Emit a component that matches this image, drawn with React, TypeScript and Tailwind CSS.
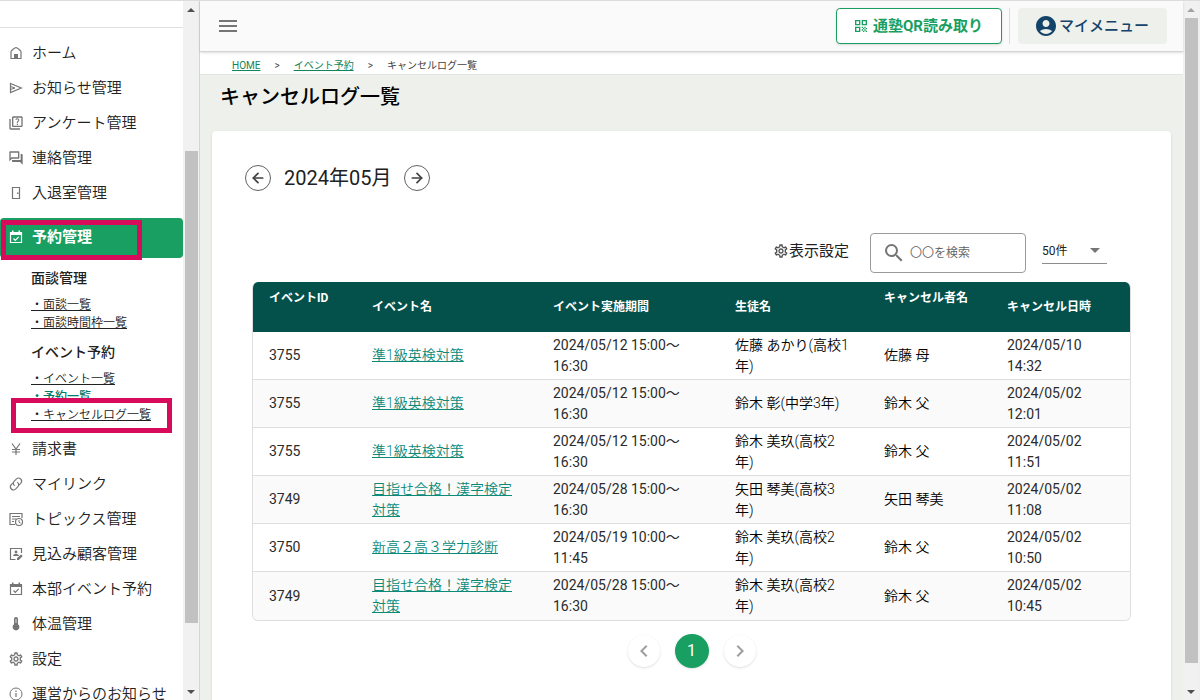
import type { ReactNode } from "react";
import { ArrowLeft, ArrowRight } from "lucide-react";
import {
  MdAccountCircle,
  MdArrowDropDown,
  MdChevronLeft,
  MdChevronRight,
  MdMenu,
  MdOutlineForum,
  MdOutlineQuiz,
  MdOutlineSettings,
  MdQrCode,
  MdSearch,
} from "react-icons/md";

type NavItem = { label: string; icon: ReactNode };

const iconClass = "mb-0.5 h-4 w-4 shrink-0 text-[#757575]";

function HomeIcon() {
  return (
    <svg viewBox="0 0 16 16" className={iconClass} fill="none">
      <path
        d="M3 13.500V6.500C3.200 5.300 6.800 2.700 8 2.700s4.800 2.600 5 3.800v7Z"
        stroke="currentColor"
        strokeWidth="1.2"
      />
      <path d="M6 14V9h4v5Z" fill="currentColor" />
    </svg>
  );
}

function SendIcon() {
  return (
    <svg viewBox="0 0 16 16" className={iconClass} fill="none">
      <path
        d="M2.500 3.500 13.300 8 2.500 12.500Z"
        stroke="currentColor"
        strokeWidth="1.2"
      />
      <path d="M2.500 6.500 7 8 2.500 9.500" stroke="currentColor" />
    </svg>
  );
}

function DoorIcon() {
  return (
    <svg viewBox="0 0 16 16" className={iconClass} fill="none">
      <path
        d="M4.500 2.500h7v11h-7Z"
        stroke="currentColor"
        strokeWidth="1.2"
      />
      <path d="M9 7.500h1.500v1.500H9Z" fill="currentColor" />
    </svg>
  );
}

function CalendarIcon({ className }: { className: string }) {
  return (
    <svg viewBox="0 0 16 16" className={className} fill="none">
      <path
        d="M2.500 3.500h11v10h-11Z"
        stroke="currentColor"
        strokeWidth="1.2"
      />
      <path
        d="M2 3h12v3H2ZM4 1.500h1.500V4H4ZM10.500 1.500H12V4h-1.500Z"
        fill="currentColor"
      />
      <path
        d="m5.500 9.500 1.800 1.800 3.400-3.500"
        stroke="currentColor"
        strokeWidth="1.2"
      />
    </svg>
  );
}

function YenIcon() {
  return (
    <svg viewBox="0 0 16 16" className={iconClass} fill="none">
      <path
        d="m4 2.500 4 5.500 4-5.500M8 8v6M4 8.500h8M4 11h8"
        stroke="currentColor"
        strokeWidth="1.2"
      />
    </svg>
  );
}

function LinkIcon() {
  return (
    <svg viewBox="0 0 24 24" className={iconClass} fill="none">
      <path
        d="M10 14.500c-2.500-1.800-2.600-4.800-.6-6.900l3-3c4.500-4.200 10.800 1.700 6.700 6.400l-2.600 2.700M14 9.500c2.500 1.800 2.600 4.800.6 6.900l-3 3c-4.500 4.200-10.800-1.700-6.700-6.400l2.600-2.700"
        stroke="currentColor"
        strokeWidth="1.7"
      />
    </svg>
  );
}

function TopicsIcon() {
  return (
    <svg viewBox="0 0 16 16" className={iconClass} fill="none">
      <path
        d="M14 7V2.500H2v11h5M4 5.500h8M4 8h4M4 10.500h2"
        stroke="currentColor"
        strokeWidth="1.2"
      />
      <circle
        cx="11"
        cy="11"
        r="3.500"
        stroke="currentColor"
        strokeWidth="1.2"
      />
      <path d="M11 9v2.200l1.600.9" stroke="currentColor" />
    </svg>
  );
}

function ProspectIcon() {
  return (
    <svg viewBox="0 0 16 16" className={iconClass} fill="none">
      <path
        d="M7.500 13.500h-5v-11h11V7"
        stroke="currentColor"
        strokeWidth="1.2"
      />
      <circle cx="8" cy="6" r="1.400" fill="currentColor" />
      <path d="M5 10c.4-2.600 5.600-2.600 6 0Z" fill="currentColor" />
      <path d="M9 14v-1.700L13 8.400l1.700 1.700-3.900 3.900Z" fill="currentColor" />
    </svg>
  );
}

function ThermometerIcon() {
  return (
    <svg viewBox="0 0 16 16" className={iconClass} fill="currentColor">
      <path d="M6 3a2 2 0 0 1 4 0v5.300a3.400 3.400 0 1 1-4 0Z" />
      <path d="M8 3v4" stroke="white" strokeWidth="0.8" />
    </svg>
  );
}

function InfoIcon() {
  return (
    <svg viewBox="0 0 16 16" className={iconClass} fill="none">
      <circle cx="8" cy="8" r="6" stroke="currentColor" />
      <path
        d="M8 7v4M8 4.500V6"
        stroke="currentColor"
        strokeWidth="1.2"
      />
    </svg>
  );
}

const topItems: NavItem[] = [
  { label: "ホーム", icon: <HomeIcon /> },
  { label: "お知らせ管理", icon: <SendIcon /> },
  { label: "アンケート管理", icon: <MdOutlineQuiz className={iconClass} /> },
  { label: "連絡管理", icon: <MdOutlineForum className={iconClass} /> },
  { label: "入退室管理", icon: <DoorIcon /> },
];

const bottomItems: NavItem[] = [
  { label: "請求書", icon: <YenIcon /> },
  { label: "マイリンク", icon: <LinkIcon /> },
  { label: "トピックス管理", icon: <TopicsIcon /> },
  { label: "見込み顧客管理", icon: <ProspectIcon /> },
  {
    label: "本部イベント予約",
    icon: <CalendarIcon className={iconClass} />,
  },
  { label: "体温管理", icon: <ThermometerIcon /> },
  { label: "設定", icon: <MdOutlineSettings className={iconClass} /> },
  { label: "運営からのお知らせ", icon: <InfoIcon /> },
];

const columns = [
  { label: "イベントID", className: "w-[103px] align-top pt-2" },
  { label: "イベント名", className: "w-[181px] align-middle" },
  { label: "イベント実施期間", className: "w-[182px] align-middle" },
  { label: "生徒名", className: "w-[149px] align-middle" },
  { label: "キャンセル者名", className: "w-[123px] align-top pt-2" },
  { label: "キャンセル日時", className: "w-[139px] align-middle" },
];

const logs = [
  {
    id: 3755,
    event: "準1級英検対策",
    period: "2024/05/12 15:00～16:30",
    student: "佐藤 あかり(高校1年)",
    canceledBy: "佐藤 母",
    canceledAt: "2024/05/10 14:32",
  },
  {
    id: 3755,
    event: "準1級英検対策",
    period: "2024/05/12 15:00～16:30",
    student: "鈴木 彰(中学3年)",
    canceledBy: "鈴木 父",
    canceledAt: "2024/05/02 12:01",
  },
  {
    id: 3755,
    event: "準1級英検対策",
    period: "2024/05/12 15:00～16:30",
    student: "鈴木 美玖(高校2年)",
    canceledBy: "鈴木 父",
    canceledAt: "2024/05/02 11:51",
  },
  {
    id: 3749,
    event: "目指せ合格！漢字検定対策",
    period: "2024/05/28 15:00～16:30",
    student: "矢田 琴美(高校3年)",
    canceledBy: "矢田 琴美",
    canceledAt: "2024/05/02 11:08",
  },
  {
    id: 3750,
    event: "新高２高３学力診断",
    period: "2024/05/19 10:00～11:45",
    student: "鈴木 美玖(高校2年)",
    canceledBy: "鈴木 父",
    canceledAt: "2024/05/02 10:50",
  },
  {
    id: 3749,
    event: "目指せ合格！漢字検定対策",
    period: "2024/05/28 15:00～16:30",
    student: "鈴木 美玖(高校2年)",
    canceledBy: "鈴木 父",
    canceledAt: "2024/05/02 10:45",
  },
];

function NavList({ items }: { items: NavItem[] }) {
  return (
    <ul>
      {items.map((item) => (
        <li key={item.label}>
          <a href="#" className="flex h-[35px] items-center gap-2 pl-2">
            {item.icon}
            <span className="whitespace-nowrap text-[15px] font-[350]">
              {item.label}
            </span>
          </a>
        </li>
      ))}
    </ul>
  );
}

function SubLink({ label }: { label: string }) {
  return (
    <a href="#" className="relative block text-xs/[18px] font-[350] underline">
      {label}
    </a>
  );
}

function Scrollbar({
  offset,
  size,
  upColor,
}: {
  offset: string;
  size: string;
  upColor: string;
}) {
  return (
    <div
      aria-hidden="true"
      className="flex w-4 shrink-0 flex-col items-center bg-[#f1f1f1]"
    >
      <svg viewBox="0 0 16 17" className="h-[17px] w-4" fill={upColor}>
        <path d="M4 11h8L8 7Z" />
      </svg>
      <div className="w-full flex-1 pl-0.5 pr-px">
        <div style={{ height: offset }} />
        <div className="bg-[#c1c1c1]" style={{ height: size }} />
      </div>
      <svg viewBox="0 0 16 17" className="h-[17px] w-4" fill="#505050">
        <path d="M4 7h8l-4 4Z" />
      </svg>
    </div>
  );
}

function Sidebar() {
  return (
    <aside className="flex w-[200px] shrink-0 border-r border-[#d5d5d5] bg-white">
      <nav className="min-w-0 flex-1 overflow-hidden">
        <div className="mb-2 h-[27px] border-b border-[#e0e0e0]" />
        <NavList items={topItems} />
        <div className="relative mt-[7px] h-10 rounded bg-[#189f61]">
          <a
            href="#"
            className="flex h-[38px] items-center gap-2 pl-2 text-[15px] font-bold text-white"
          >
            <CalendarIcon className="h-4 w-4 shrink-0" />
            予約管理
          </a>
          <div className="pointer-events-none absolute left-px top-0.5 h-10 w-[141px] border-[5px] border-[#d80a5c]" />
        </div>
        <div className="pb-2 pl-[31px] pt-2.5">
          <h2 className="mb-[7px] text-sm/[21px] font-medium">面談管理</h2>
          <SubLink label="・面談一覧" />
          <SubLink label="・面談時間枠一覧" />
          <h2 className="mb-[7px] mt-2.5 text-sm/[21px] font-medium">
            イベント予約
          </h2>
          <SubLink label="・イベント一覧" />
          <a
            href="#"
            className="block text-xs/[18px] font-medium text-[#00796b] underline"
          >
            ・予約一覧
          </a>
          <div className="relative">
            <div className="absolute -left-5 -top-2 h-[35px] w-[161px] border-[5px] border-[#d80a5c] bg-white" />
            <SubLink label="・キャンセルログ一覧" />
          </div>
        </div>
        <NavList items={bottomItems} />
      </nav>
      <Scrollbar offset="20%" size="71%" upColor="#505050" />
    </aside>
  );
}

function Header() {
  return (
    <header className="relative flex h-[51px] shrink-0 items-center border-b border-[#d4d6d4] bg-[#fafafa] px-4 shadow-sm">
      <button aria-label="メニュー" className="text-[#757575]">
        <MdMenu className="h-6 w-6" />
      </button>
      <button className="ml-auto flex h-9 items-center gap-1 rounded border border-[#189f61] bg-white pl-4 pr-[18px] text-[15px] font-bold text-[#189f61] shadow">
        <MdQrCode className="h-4 w-4" />
        通塾QR読み取り
      </button>
      <div className="ml-[7px] mr-2 h-9 w-px bg-[#dcdcdc]" />
      <button className="flex h-9 items-center gap-px rounded bg-[#eef0ec] pl-4 pr-[18px] text-[15px] font-medium text-[#14436a]">
        <MdAccountCircle className="h-6 w-6" />
        マイメニュー
      </button>
    </header>
  );
}

function Breadcrumb() {
  return (
    <nav className="flex h-[23px] shrink-0 items-center gap-3.5 border-b border-[#e3e5e1] bg-white pl-8 pt-1 text-[10px] text-[#424242]">
      <a href="#" className="text-[#11845a] underline">
        HOME
      </a>
      <span>&gt;</span>
      <a href="#" className="text-[#11845a] underline">
        イベント予約
      </a>
      <span>&gt;</span>
      <span>キャンセルログ一覧</span>
    </nav>
  );
}

function MonthPicker() {
  const arrowClass =
    "flex h-[26px] w-[26px] items-center justify-center rounded-full border border-[#616161] text-[#424242]";

  return (
    <div className="flex items-center gap-[13px]">
      <button aria-label="前の月" className={arrowClass}>
        <ArrowLeft className="h-4 w-4" strokeWidth={2.6} />
      </button>
      <span className="text-xl/[26px]">2024年05月</span>
      <button aria-label="次の月" className={arrowClass}>
        <ArrowRight className="h-4 w-4" strokeWidth={2.6} />
      </button>
    </div>
  );
}

function Toolbar() {
  return (
    <div className="flex items-center justify-end gap-4 pr-6">
      <button className="mb-1 mr-[5px] flex items-center text-[15px]">
        <MdOutlineSettings className="h-4 w-4 text-[#505050]" />
        表示設定
      </button>
      <label className="flex h-10 w-[156px] items-center gap-1 rounded border border-[#9b9b9b] px-[11px]">
        <MdSearch className="h-6 w-6 shrink-0 text-[#757575]" />
        <input
          type="text"
          aria-label="検索"
          placeholder="〇〇を検索"
          className="w-full min-w-0 text-xs font-[350] outline-none placeholder:text-[#616161]"
        />
      </label>
      <label className="relative mb-[3px] flex w-[65px] items-center border-b border-[#8c8c8c]">
        <select
          aria-label="表示件数"
          className="h-6 w-full appearance-none text-xs outline-none"
        >
          <option>50件</option>
        </select>
        <MdArrowDropDown className="pointer-events-none absolute -top-px right-0 h-6 w-6 text-[#757575]" />
      </label>
    </div>
  );
}

function LogTable() {
  return (
    <div className="overflow-hidden rounded-md border-x border-b border-[#dedede]">
      <table className="w-full table-fixed border-separate border-spacing-0 text-left">
        <thead>
          <tr className="h-[50px] bg-[#04504b] text-xs text-white">
            {columns.map((column) => (
              <th
                key={column.label}
                className={`whitespace-nowrap px-4 font-bold ${column.className}`}
              >
                {column.label}
              </th>
            ))}
          </tr>
        </thead>
        <tbody className="text-sm/[21px] text-[#2b2b2b] [&_td]:h-12 [&_td]:px-4 [&_tr:not(:last-child)_td]:border-b [&_td]:border-[#dedede]">
          {logs.map((log, i) => (
            <tr key={i} className="even:bg-[#fafafa]">
              <td>{log.id}</td>
              <td className="font-[350]">
                <a href="#" className="text-[#0b8a79] underline">
                  {log.event}
                </a>
              </td>
              <td>{log.period}</td>
              <td className="font-[350] text-black">{log.student}</td>
              <td className="font-[350] text-black">{log.canceledBy}</td>
              <td>{log.canceledAt}</td>
            </tr>
          ))}
        </tbody>
      </table>
    </div>
  );
}

function Pagination() {
  const stepClass =
    "flex h-8 w-8 items-center justify-center rounded-full bg-white text-[#9e9e9e] shadow";

  return (
    <div className="mt-[13px] flex items-center justify-center gap-[15px]">
      <button aria-label="前のページ" className={stepClass}>
        <MdChevronLeft className="h-6 w-6" />
      </button>
      <button className="h-[34px] w-[34px] rounded-full bg-[#189f61] text-base text-white shadow">
        1
      </button>
      <button aria-label="次のページ" className={stepClass}>
        <MdChevronRight className="h-6 w-6" />
      </button>
    </div>
  );
}

function App() {
  return (
    <div
      lang="ja"
      className="flex h-screen overflow-hidden border-t border-[#dcdcdc] bg-[#edf0eb] pr-px font-[Roboto,'Noto_Sans_CJK_JP',sans-serif] text-[#212121]"
    >
      <Sidebar />
      <div className="flex min-w-0 flex-1 flex-col">
        <Header />
        <Breadcrumb />
        <main className="flex flex-1 flex-col px-3">
          <h1 className="mb-[19px] mt-[7px] pl-2 text-xl/[30px] font-medium text-black">
            キャンセルログ一覧
          </h1>
          <section className="flex-1 rounded-t bg-white px-[33px] pt-[34px] shadow">
            <MonthPicker />
            <div className="mt-[42px] px-[7px]">
              <Toolbar />
              <div className="mt-[9px]">
                <LogTable />
              </div>
              <Pagination />
            </div>
          </section>
        </main>
      </div>
      <Scrollbar offset="0%" size="97%" upColor="#a3a3a3" />
    </div>
  );
}

export default App;
